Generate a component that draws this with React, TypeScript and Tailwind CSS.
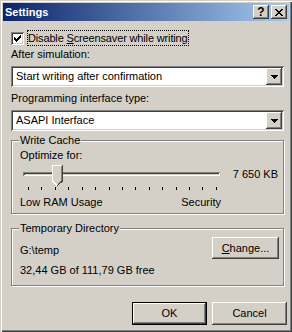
import { useState } from 'react';

const raised =
  'shadow-[inset_-1px_-1px_#404040,inset_1px_1px_#ffffff,inset_-2px_-2px_#808080,inset_2px_2px_#d4d0c8]';
const sunken =
  'shadow-[inset_1px_1px_#808080,inset_-1px_-1px_#ffffff,inset_2px_2px_#404040,inset_-2px_-2px_#d4d0c8]';
const etched = 'border border-[#808080] shadow-[inset_1px_1px_#ffffff,1px_1px_#ffffff]';

function CheckMark() {
  const cols = [2, 3, 4, 3, 2, 1, 0];
  return (
    <svg width="7" height="7" viewBox="0 0 7 7" shapeRendering="crispEdges">
      {cols.map((y, x) => (
        <rect key={x} x={x} y={y} width="1" height="3" fill="#000" />
      ))}
    </svg>
  );
}

function DownArrow() {
  return (
    <svg width="7" height="4" viewBox="0 0 7 4" shapeRendering="crispEdges">
      <rect x="0" y="0" width="7" height="1" fill="#000" />
      <rect x="1" y="1" width="5" height="1" fill="#000" />
      <rect x="2" y="2" width="3" height="1" fill="#000" />
      <rect x="3" y="3" width="1" height="1" fill="#000" />
    </svg>
  );
}

function Combo({ value }: { value: string }) {
  return (
    <div className={`flex items-center h-[21px] bg-white p-[2px] ${sunken}`}>
      <span className="flex-1 pl-[3px] leading-[13px]">{value}</span>
      <div className={`w-[16px] h-[17px] bg-[#d4d0c8] flex items-center justify-center ${raised}`}>
        <DownArrow />
      </div>
    </div>
  );
}

function Thumb() {
  return (
    <svg width="11" height="21" viewBox="0 0 11 21" shapeRendering="crispEdges">
      <polygon points="0,0 11,0 11,16 5.5,21 0,16" fill="#d4d0c8" />
      <path d="M0.5 16 V0.5 H10" stroke="#fff" fill="none" />
      <path d="M0.5 16 L5 20.5" stroke="#fff" fill="none" />
      <path d="M10.5 0 V16 L5.5 20.5" stroke="#404040" fill="none" />
      <path d="M9.5 1 V15.5 L5.5 19.5" stroke="#808080" fill="none" />
    </svg>
  );
}

function Group({ title, className, children }: { title: string; className: string; children: React.ReactNode }) {
  return (
    <div className={`relative ${etched} ${className}`}>
      <span className="absolute left-[7px] top-[-7px] bg-[#d4d0c8] px-[1px] leading-[13px]">{title}</span>
      {children}
    </div>
  );
}

export default function App() {
  const [checked] = useState(true);
  const ticks = Array.from({ length: 15 });

  return (
    <div
      className="w-[292px] h-[332px] bg-[#d4d0c8] p-[3px] flex flex-col text-[11px] text-black shadow-[inset_1px_1px_#d4d0c8,inset_2px_2px_#ffffff,inset_-1px_-1px_#404040,inset_-2px_-2px_#808080]"
      style={{ fontFamily: '"Liberation Sans", Arial, sans-serif' }}
    >
      {/* title bar */}
      <div className="h-[18px] flex items-center bg-[linear-gradient(to_right,#0a246a,#a6caf0)] pl-[2px] pr-[2px]">
        <span className="flex-1 font-bold text-white leading-[13px]">Settings</span>
        <div className={`w-[16px] h-[14px] bg-[#d4d0c8] flex items-center justify-center font-bold text-[12px] leading-none ${raised}`}>
          ?
        </div>
        <div className={`ml-[2px] w-[16px] h-[14px] bg-[#d4d0c8] flex items-center justify-center ${raised}`}>
          <svg width="8" height="7" viewBox="0 0 8 7" shapeRendering="crispEdges">
            {[0, 1, 2, 3, 4, 5, 6].map((i) => (
              <g key={i}>
                <rect x={i} y={i} width="2" height="1" fill="#000" />
                <rect x={6 - i} y={i} width="2" height="1" fill="#000" />
              </g>
            ))}
          </svg>
        </div>
      </div>

      {/* client */}
      <div className="flex flex-col pl-[8px] pr-[5px]">
        <div className="mt-[9px] h-[16px] flex items-center">
          <div className={`w-[13px] h-[13px] bg-white flex items-center justify-center ${sunken}`}>
            {checked && <CheckMark />}
          </div>
          <span className="ml-[3px] h-[16px] px-[1px] leading-[16px] tracking-[-0.15px] outline-1 outline-dotted outline-black -outline-offset-1 whitespace-nowrap">
            Disable <span className="underline underline-offset-1">S</span>creensaver while writing
          </span>
        </div>

        <div className="mt-[2px] h-[13px] leading-[13px]">After simulation:</div>
        <div className="mt-[5px]">
          <Combo value="Start writing after confirmation" />
        </div>

        <div className="mt-[5px] h-[13px] leading-[13px]">Programming interface type:</div>
        <div className="mt-[5px]">
          <Combo value="ASAPI Interface" />
        </div>

        <Group title="Write Cache" className="mt-[9px] h-[74px] pl-[8px] pr-[5px]">
          <div className="mt-[8px] h-[13px] leading-[13px]">Optimize for:</div>
          <div className="mt-[3px] flex">
            <div className="w-[203px] flex flex-col">
              <div className="relative h-[21px]">
                <div className={`absolute left-[3px] right-[3px] top-[7px] h-[4px] ${sunken}`} />
                <div className="absolute left-[32px] top-0">
                  <Thumb />
                </div>
              </div>
              <div className="mt-[1px] ml-[8px] w-[189px] h-[3px] flex justify-between">
                {ticks.map((_, i) => (
                  <div key={i} className="w-[1px] h-[3px] bg-black" />
                ))}
              </div>
            </div>
            <div className="flex-1 text-right pt-[3px] leading-[13px]">7 650 KB</div>
          </div>
          <div className="mt-[6px] w-[201px] flex justify-between leading-[13px]">
            <span>Low RAM Usage</span>
            <span>Security</span>
          </div>
        </Group>

        <Group title="Temporary Directory" className="mt-[14px] h-[58px] pl-[8px] pr-[4px] flex justify-between">
          <div className="flex flex-col pt-[15px]">
            <div className="h-[13px] leading-[13px]">G:\temp</div>
            <div className="mt-[7px] h-[13px] leading-[13px]">32,44 GB of 111,79 GB free</div>
          </div>
          <div className="pt-[8px]">
            <div className={`w-[67px] h-[22px] bg-[#d4d0c8] flex items-center justify-center ${raised}`}>
              <span>
                <span className="underline underline-offset-1">C</span>hange...
              </span>
            </div>
          </div>
        </Group>
      </div>

      <div className="mt-[16px] flex justify-end gap-[5px] pr-[2px]">
        <div className="w-[75px] h-[23px] border border-black">
          <div className={`w-full h-full bg-[#d4d0c8] flex items-center justify-center ${raised}`}>OK</div>
        </div>
        <div className={`w-[75px] h-[23px] bg-[#d4d0c8] flex items-center justify-center ${raised}`}>Cancel</div>
      </div>
    </div>
  );
}
